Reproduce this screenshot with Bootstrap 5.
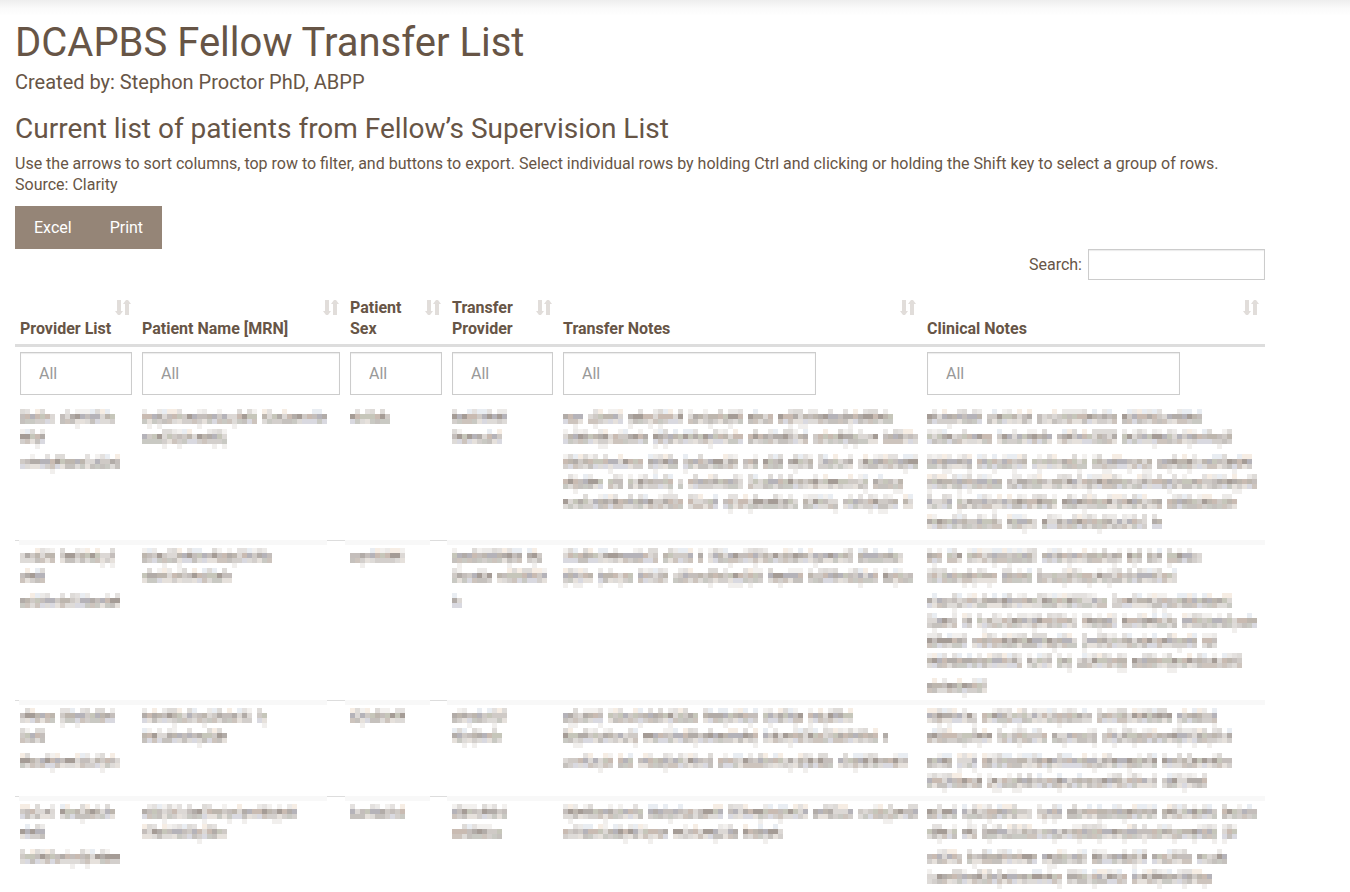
<!DOCTYPE html>
<html lang="en">
<head>
<meta charset="utf-8">
<meta name="viewport" content="width=device-width, initial-scale=1">
<title>DCAPBS Fellow Transfer List</title>
<link href="https://cdn.jsdelivr.net/npm/bootstrap@5.3.0/dist/css/bootstrap.min.css" rel="stylesheet">
<style>
body{font-family:Roboto,sans-serif;font-size:16px;line-height:21px;color:#675546;background:#fff}
.top-shade{height:16px;background:linear-gradient(#eee,#fafafa 50%,#fff)}
.report{padding:5px 85px 0 15px}
h1{font-size:40px;line-height:44px;font-weight:400;margin:0 0 6px}
.byline{font-size:20px;line-height:22px;font-weight:400;margin:0 0 22px}
h2{font-size:28px;line-height:28px;font-weight:400;margin:0 0 10px}
h1,h2,.byline{color:#675546}
.exports{margin-top:11px}
.btn-export{background:#958577;color:#fff;border:0;border-radius:0;font-size:16px;line-height:21px;padding:11px 19px}
.btn-export:hover{background:#7d6e61;color:#fff}
.form-control{border:1px solid #ccc;border-radius:0;font-size:16px;line-height:21px;color:#675546;box-shadow:inset 0 1px 1px rgba(0,0,0,.08)}
.form-control::placeholder{color:#999}
.search-label{margin-right:6px}
.search-box{width:177px;height:31px}
.filter{height:43px;padding:10px 18px}
.note-filter{max-width:253px}
.patients{table-layout:fixed;color:#675546;margin:12px 0 0}
.patients>thead>tr>th{padding:5px;vertical-align:bottom;font-weight:700;color:#675546;position:relative}
.patients>thead>tr.titles>th{border-bottom:3px solid #ddd}
.sorter{position:absolute;right:6px;top:8px;padding:0;border:0;background:none;line-height:0}
.patients>tbody>tr>td{padding:5px 0 5px 5px;line-height:0;border-top:1px solid transparent;background-repeat:no-repeat;background-clip:border-box;background-origin:border-box}
.patients>tbody>tr+tr>td{background-image:linear-gradient(#f8f8f8,#f8f8f8),linear-gradient(#ddd,#ddd);background-size:100% 5px,100% 1px}
.patients>tbody>tr+tr>td:first-child{background-position:4px 0,0 0}
.patients>tbody>tr+tr>td:nth-child(2){background-size:calc(100% - 18px) 5px,100% 1px}
.patients>tbody>tr+tr>td:nth-child(3){background-size:calc(100% - 17px) 5px,100% 1px}
.mosaic{display:block;max-width:100%;overflow:visible}
col.c1{width:9.76%}col.c2{width:16.64%}col.c3{width:8.16%}col.c4{width:8.88%}col.c5{width:29.12%}
</style>
</head>
<body>
<div class="top-shade"></div>
<main class="report">
  <h1>DCAPBS Fellow Transfer List</h1>
  <h4 class="byline">Created by: Stephon Proctor PhD, ABPP</h4>
  <h2>Current list of patients from Fellow’s Supervision List</h2>
  <p class="mb-0">Use the arrows to sort columns, top row to filter, and buttons to export. Select individual rows by holding Ctrl and clicking or holding the Shift key to select a group of rows.<br>Source: Clarity</p>
  <div class="exports d-flex">
    <button type="button" class="btn btn-export">Excel</button><button type="button" class="btn btn-export">Print</button>
  </div>
  <div class="d-flex justify-content-end align-items-center">
    <label for="search" class="search-label">Search:</label>
    <input id="search" type="search" class="form-control search-box">
  </div>
  <table class="table table-borderless patients">
    <colgroup><col class="c1"><col class="c2"><col class="c3"><col class="c4"><col class="c5"><col class="c6"></colgroup>
    <thead>
      <tr class="titles">
        <th scope="col">Provider List</th><th scope="col">Patient Name [MRN]</th><th scope="col">Patient<br>Sex</th><th scope="col">Transfer<br>Provider</th><th scope="col">Transfer Notes</th><th scope="col">Clinical Notes</th>
      </tr>
      <tr class="filters">
        <th><input class="form-control filter" placeholder="All" aria-label="Filter provider list"></th>
        <th><input class="form-control filter" placeholder="All" aria-label="Filter patient name"></th>
        <th><input class="form-control filter" placeholder="All" aria-label="Filter patient sex"></th>
        <th><input class="form-control filter" placeholder="All" aria-label="Filter transfer provider"></th>
        <th><input class="form-control filter note-filter" placeholder="All" aria-label="Filter transfer notes"></th>
        <th><input class="form-control filter note-filter" placeholder="All" aria-label="Filter clinical notes"></th>
      </tr>
    </thead>
    <tbody id="rows"></tbody>
  </table>
</main>
<script src="https://cdn.jsdelivr.net/npm/bootstrap@5.3.0/dist/js/bootstrap.bundle.min.js"></script>
<script>
// Sort control in every column title
document.querySelectorAll('.titles th').forEach(th => {
  th.insertAdjacentHTML('beforeend', `<button type="button" class="sorter" aria-label="Sort ${th.textContent}"><svg width="16" height="15" viewBox="0 0 16 15" fill="#e1ddda" aria-hidden="true"><path d="M2 0h4v11h2l-3 4H3l-3-4h2zM10 15h4V4h2l-3-4h-2L8 4h2z"/></svg></button>`);
});

// Patient data stays masked: each line lists the word lengths in mosaic cells
const provider = '7 11/5/20';
const rows = [
  [provider, '23 13/17', '8', '11/10',
   '4 7 11 11 5 23/17 18 12 13 7/16 6 11 3 4 5 7 12/8 3 9 1 11 24 6/24 6 15 7 11 2',
   '11 9 16 16/13 11 12 22/9 10 11 12 19/15 50/5 20 20 14/15 6 21 2'],
  [provider, '26/18', '11', '14 3/8 10/2',
   '19 6 1 29 9/6 7 6 18 7 14 6',
   '3 3 14 16 3 3 7/14 6 28/36 24/6 2 20 7 11 15/8 21 23 3/19 5 3 10 22/12'],
  [provider, '22 2/17', '11', '11/10',
   '8 18 11 8 9/15 23 23 1/10 3 15 23 14',
   '10 22 15 8/13 10 9 26/5 4 35 14/11 34 9'],
  [provider, '31/17', '11', '11/10',
   '16 15 16 8 12/21 13 8',
   '6 14 5 18 11 7/6 3 47 3/7 14 9 11 8 6/27 12 16']
];
let seed = 7;
const rnd = () => (seed = (seed * 16807) % 2147483647) / 2147483647;
const pick = list => list[Math.floor(rnd() * list.length)];
const light = ['#eceae8', '#e4e1df', '#f3f1ef', '#e9edf2', '#f6ede4', '#dedbd8'];
const dark = ['#b2aca8', '#a59c96', '#c4bebb', '#bdb6ae', '#cfcac6', '#b5b3b9', '#c9bbb2', '#c6c6ba', '#dcd8d5'];
const mid = ['#d3cfcc', '#c5c1bd', '#dedbd8', '#cdc4bd', '#d9d9e0', '#c9c9c3', '#e6e1dc'];
const pitch = 150 / 7;

function mosaic(text) {
  const lines = text.split('/');
  let out = '', widest = 0;
  lines.forEach((line, n) => {
    const y = Math.round(n * pitch / 5) * 5 + 3;
    let x = 0;
    line.split(' ').map(Number).forEach(len => {
      for (let i = 0; i < len; i++, x += 5) {
        const cell = (row, fill) => out += `<rect x="${x}" y="${y + row * 5}" width="5" height="5" fill="${fill}"/>`;
        if (rnd() < .6) cell(0, pick(light));
        cell(1, pick(dark));
        cell(2, pick(mid));
        if (rnd() < .1) cell(3, '#f1efed');
      }
      x += 5;
    });
    widest = Math.max(widest, x - 5);
  });
  const height = Math.floor(lines.length * pitch - .5);
  return `<svg class="mosaic" role="img" aria-label="Masked" width="${widest}" height="${height}" shape-rendering="crispEdges">${out}</svg>`;
}
document.getElementById('rows').innerHTML =
  rows.map(r => '<tr>' + r.map(t => `<td>${mosaic(t)}</td>`).join('') + '</tr>').join('');
</script>
</body>
</html>
